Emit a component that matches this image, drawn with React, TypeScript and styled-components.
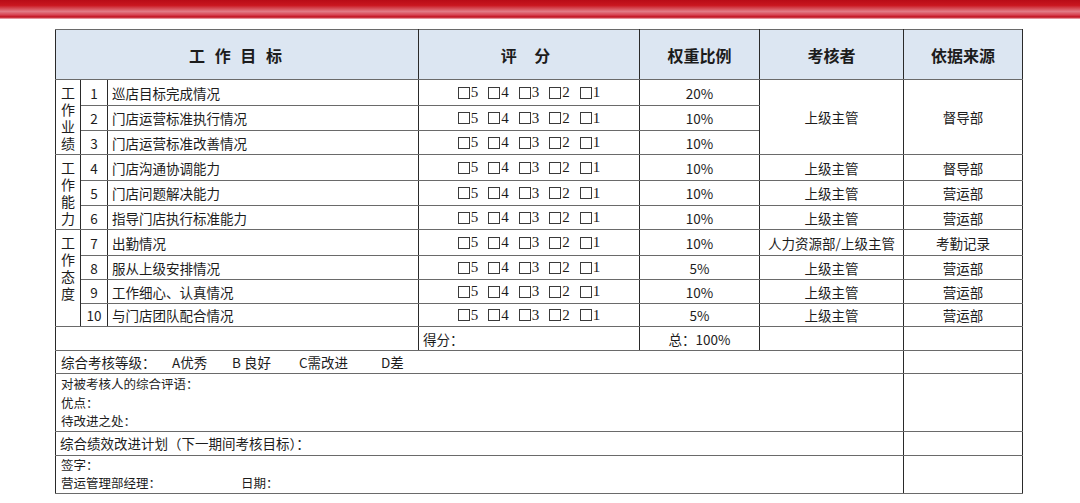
import React from 'react';
import styled, { createGlobalStyle } from 'styled-components';

const GlobalStyle = createGlobalStyle`
  body {
    margin: 0;
    background: #fff;
    color: #1c1c1c;
    font-family: "Noto Sans CJK SC", "Noto Sans", sans-serif;
  }
`;

const TopBar = styled.div`
  height: 19px;
  background: linear-gradient(
    to bottom,
    #b80c17 0%,
    #c9161f 28%,
    #e27c86 60%,
    #d84452 78%,
    #bf0f1c 90%,
    #f2c4c8 100%
  );
`;

const Page = styled.div`
  padding: 10px 0 0 55px;
`;

const Sheet = styled.table`
  border-collapse: collapse;
  table-layout: fixed;
  width: 967px;
  font-size: 13.5px;
  border: 1.5px solid #5a5a5a;

  td,
  th {
    padding: 0;
    border-top: 1px solid #6a6a6a;
    border-bottom: 1px solid #6a6a6a;
    border-left: 1px solid #2a2a2a;
    border-right: 1px solid #2a2a2a;
    font-weight: normal;
  }
`;

const Col = styled.col<{ $w: number }>`
  width: ${(p) => p.$w}px;
`;

const Row = styled.tr<{ $h: number }>`
  height: ${(p) => p.$h}px;
`;

const HeadCell = styled.th<{ $spacing?: number }>`
  background: #dce6f2;
  font-size: 16px;
  text-align: center;
  vertical-align: middle;
  && {
    font-weight: bold;
  }
  letter-spacing: ${(p) => p.$spacing ?? 0}px;
`;

const Cell = styled.td<{ $align?: 'left' | 'center' }>`
  text-align: ${(p) => p.$align ?? 'center'};
  vertical-align: middle;
  white-space: nowrap;
  && {
    padding-left: ${(p) => (p.$align === 'left' ? '4px' : '0')};
  }
`;

const CategoryCell = styled.td`
  vertical-align: top;
  text-align: center;
  font-size: 14px;
  && {
    padding-top: 4px;
  }
`;

const CategoryText = styled.div`
  width: 1em;
  margin: 0 auto;
  line-height: 17px;
  word-break: break-all;
`;

const Scores = styled.div`
  display: inline-flex;
  align-items: center;
  gap: 10px;
`;

const ScoreItem = styled.span`
  display: inline-flex;
  align-items: center;
  gap: 1px;
`;

const Box = styled.span`
  display: inline-block;
  width: 12px;
  height: 12px;
  border: 1px solid #3a3a3a;
  box-sizing: border-box;
`;

const Digit = styled.span`
  font-family: "Liberation Serif", "DejaVu Serif", serif;
  font-size: 15px;
  line-height: 1;
`;

const GradeLine = styled.div`
  display: flex;
  align-items: center;
  padding-left: 1px;
`;

const GradeItem = styled.span<{ $w?: number }>`
  width: ${(p) => (p.$w ? `${p.$w}px` : 'auto')};
`;

const NoteCell = styled.td<{ $pad?: number }>`
  vertical-align: top;
  text-align: left;
  font-size: 12.5px;
  line-height: 18.5px;
  && {
    padding-left: 5px;
    padding-top: ${(p) => p.$pad ?? 1}px;
  }
`;

const SignLine = styled.div`
  display: flex;
`;

const SignLabel = styled.span`
  width: 180px;
`;

type Item = { n: number; t: string; w: string; rater?: string; src?: string; h: number };

const groups: { name: string; shared?: [string, string]; items: Item[] }[] = [
  {
    name: '工作业绩',
    shared: ['上级主管', '督导部'],
    items: [
      { n: 1, t: '巡店目标完成情况', w: '20%', h: 26 },
      { n: 2, t: '门店运营标准执行情况', w: '10%', h: 25 },
      { n: 3, t: '门店运营标准改善情况', w: '10%', h: 24 },
    ],
  },
  {
    name: '工作能力',
    items: [
      { n: 4, t: '门店沟通协调能力', w: '10%', rater: '上级主管', src: '督导部', h: 26 },
      { n: 5, t: '门店问题解决能力', w: '10%', rater: '上级主管', src: '营运部', h: 25 },
      { n: 6, t: '指导门店执行标准能力', w: '10%', rater: '上级主管', src: '营运部', h: 24 },
    ],
  },
  {
    name: '工作态度',
    items: [
      { n: 7, t: '出勤情况', w: '10%', rater: '人力资源部/上级主管', src: '考勤记录', h: 26 },
      { n: 8, t: '服从上级安排情况', w: '5%', rater: '上级主管', src: '营运部', h: 24 },
      { n: 9, t: '工作细心、认真情况', w: '10%', rater: '上级主管', src: '营运部', h: 24 },
      { n: 10, t: '与门店团队配合情况', w: '5%', rater: '上级主管', src: '营运部', h: 23 },
    ],
  },
];

const ScoreBoxes = () => (
  <Scores>
    {[5, 4, 3, 2, 1].map((d) => (
      <ScoreItem key={d}>
        <Box />
        <Digit>{d}</Digit>
      </ScoreItem>
    ))}
  </Scores>
);

const App = () => {
  return (
    <>
      <GlobalStyle />
      <TopBar />
      <Page>
        <Sheet>
          <colgroup>
            <Col $w={25} />
            <Col $w={27} />
            <Col $w={311} />
            <Col $w={221} />
            <Col $w={120} />
            <Col $w={144} />
            <Col $w={119} />
          </colgroup>
          <tbody>
            <Row $h={50}>
              <HeadCell colSpan={3} $spacing={3}>工 作 目 标</HeadCell>
              <HeadCell $spacing={7}>评 分</HeadCell>
              <HeadCell>权重比例</HeadCell>
              <HeadCell>考核者</HeadCell>
              <HeadCell>依据来源</HeadCell>
            </Row>
            {groups.map((g) =>
              g.items.map((it, i) => (
                <Row $h={it.h} key={it.n}>
                  {i === 0 && (
                    <CategoryCell rowSpan={g.items.length}>
                      <CategoryText>{g.name}</CategoryText>
                    </CategoryCell>
                  )}
                  <Cell>{it.n}</Cell>
                  <Cell $align="left">{it.t}</Cell>
                  <Cell>
                    <ScoreBoxes />
                  </Cell>
                  <Cell>{it.w}</Cell>
                  {g.shared ? (
                    i === 0 && (
                      <>
                        <Cell rowSpan={g.items.length}>{g.shared[0]}</Cell>
                        <Cell rowSpan={g.items.length}>{g.shared[1]}</Cell>
                      </>
                    )
                  ) : (
                    <>
                      <Cell>{it.rater}</Cell>
                      <Cell>{it.src}</Cell>
                    </>
                  )}
                </Row>
              ))
            )}
            <Row $h={24}>
              <Cell colSpan={3} />
              <Cell $align="left">得分：</Cell>
              <Cell>总：100%</Cell>
              <Cell />
              <Cell />
            </Row>
            <Row $h={23}>
              <Cell colSpan={6} $align="left">
                <GradeLine>
                  <GradeItem $w={111}>综合考核等级：</GradeItem>
                  <GradeItem $w={60}>A优秀</GradeItem>
                  <GradeItem $w={67}>B 良好</GradeItem>
                  <GradeItem $w={82}>C需改进</GradeItem>
                  <GradeItem>D差</GradeItem>
                </GradeLine>
              </Cell>
              <Cell />
            </Row>
            <Row $h={57}>
              <NoteCell colSpan={6}>
                对被考核人的综合评语：
                <br />
                优点：
                <br />
                待改进之处：
              </NoteCell>
              <Cell />
            </Row>
            <Row $h={24}>
              <Cell colSpan={6} $align="left">
                综合绩效改进计划（下一期间考核目标）：
              </Cell>
              <Cell />
            </Row>
            <Row $h={38}>
              <NoteCell colSpan={6} $pad={0}>
                签字：
                <SignLine>
                  <SignLabel>营运管理部经理：</SignLabel>
                  <span>日期：</span>
                </SignLine>
              </NoteCell>
              <Cell />
            </Row>
          </tbody>
        </Sheet>
      </Page>
    </>
  );
};

export default App;
